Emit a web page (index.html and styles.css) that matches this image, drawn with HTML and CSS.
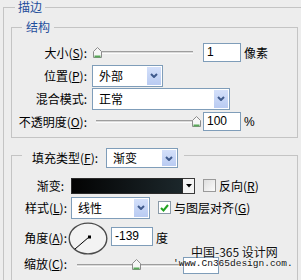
FILE: index.html
```html
<!DOCTYPE html>
<html lang="zh-CN">
<head>
  <meta charset="UTF-8" />
  <title>描边</title>
  <link rel="stylesheet" href="styles.css">
</head>
<body>
  <fieldset class="panel">
    <legend class="panel-title">描边</legend>

    <fieldset class="group group-struct">
      <legend class="group-title">结构</legend>
      <div class="form form-struct">
        <span class="lbl">大小(<u>S</u>):</span>
        <div class="ctl">
          <div class="slider">
            <span class="track"></span>
            <svg class="thumb" style="left:1px" width="9" height="11" viewBox="0 0 9 11"><path d="M4.5 .5 8.5 4.5V10.5H.5V4.5Z" fill="#f6f6f6" stroke="#8c8c8c"/><path d="M1.5 9.5H7.5" stroke="#58a858" stroke-width="2"/></svg>
          </div>
          <div class="num">1</div>
          <span class="unit">像素</span>
        </div>

        <span class="lbl">位置(<u>P</u>):</span>
        <div class="ctl">
          <div class="select w-pos"><span class="val">外部</span><span class="btn"><svg width="8" height="5" viewBox="0 0 8 5"><path d="M1 1 4 4 7 1" fill="none" stroke="#3f5a8c" stroke-width="2"/></svg></span></div>
        </div>

        <span class="lbl">混合模式:</span>
        <div class="ctl">
          <div class="select w-blend"><span class="val">正常</span><span class="btn"><svg width="8" height="5" viewBox="0 0 8 5"><path d="M1 1 4 4 7 1" fill="none" stroke="#3f5a8c" stroke-width="2"/></svg></span></div>
        </div>

        <span class="lbl">不透明度(<u>O</u>):</span>
        <div class="ctl">
          <div class="slider">
            <span class="track"></span>
            <svg class="thumb" style="left:100px" width="9" height="11" viewBox="0 0 9 11"><path d="M4.5 .5 8.5 4.5V10.5H.5V4.5Z" fill="#f6f6f6" stroke="#8c8c8c"/><path d="M1.5 9.5H7.5" stroke="#58a858" stroke-width="2"/></svg>
          </div>
          <div class="num">100</div>
          <span class="unit latin">%</span>
        </div>
      </div>
    </fieldset>

    <fieldset class="group group-fill">
      <legend class="fill-title">
        <span>填充类型(<u>F</u>):</span>
        <div class="select w-fill"><span class="val">渐变</span><span class="btn"><svg width="8" height="5" viewBox="0 0 8 5"><path d="M1 1 4 4 7 1" fill="none" stroke="#3f5a8c" stroke-width="2"/></svg></span></div>
      </legend>
      <div class="form form-fill">
        <span class="lbl lbl-grad">渐变:</span>
        <div class="ctl">
          <div class="grad"></div>
          <div class="grad-btn"><svg width="6" height="4" viewBox="0 0 6 4"><path d="M0 0H6L3 3.5Z" fill="#000"/></svg></div>
          <span class="check"></span>
          <span class="check-text">反向(<u>R</u>)</span>
        </div>

        <span class="lbl">样式(<u>L</u>):</span>
        <div class="ctl">
          <div class="select w-style"><span class="val">线性</span><span class="btn"><svg width="8" height="5" viewBox="0 0 8 5"><path d="M1 1 4 4 7 1" fill="none" stroke="#3f5a8c" stroke-width="2"/></svg></span></div>
          <span class="check checked"><svg width="9" height="8" viewBox="0 0 9 8"><path d="M1 4 3.5 6.5 8 1" fill="none" stroke="#22a322" stroke-width="2"/></svg></span>
          <span class="check-text">与图层对齐(<u>G</u>)</span>
        </div>

        <span class="lbl">角度(<u>A</u>):</span>
        <div class="ctl ctl-angle">
          <svg class="dial" width="40" height="33" viewBox="0 0 40 33">
            <ellipse cx="20" cy="16.5" rx="18.8" ry="15.4" fill="#f3f3f3" stroke="#4c4c4c" stroke-width="1.4"/>
            <path d="M21 15 7 27" stroke="#000" stroke-width="1"/>
            <rect x="20" y="13.5" width="3" height="3" fill="#000"/>
          </svg>
          <div class="num w-angle">-139</div>
          <span class="unit">度</span>
        </div>

        <span class="lbl">缩放(<u>C</u>):</span>
        <div class="ctl ctl-scale">
          <div class="slider w-scale">
            <span class="track"></span>
            <svg class="thumb" style="left:61px" width="9" height="11" viewBox="0 0 9 11"><path d="M4.5 .5 8.5 4.5V10.5H.5V4.5Z" fill="#f6f6f6" stroke="#8c8c8c"/><path d="M1.5 9.5H7.5" stroke="#58a858" stroke-width="2"/></svg>
          </div>
          <div class="num w-scale-num"></div>
        </div>
      </div>
    </fieldset>
  </fieldset>

  <div class="watermark">
    <div class="wm-cn">中国-365 设计网</div>
    <div class="wm-url">'www.Cn365design.com.</div>
  </div>
</body>
</html>
```

FILE: styles.css
```css
body {
  margin: 0;
  width: 301px;
  height: 280px;
  overflow: hidden;
  position: relative;
  background: #ededed;
  font-family: "Noto Sans CJK SC", sans-serif;
  font-size: 12px;
  line-height: 14px;
  color: #000;
}
u {
  text-decoration-thickness: 1px;
  text-underline-offset: 1px;
}
.panel {
  margin: 0 0 0 3px;
  padding: 0;
  width: 320px;
  height: 320px;
  box-sizing: border-box;
  border: 1px solid #c4c4c4;
  min-inline-size: 0;
}
.panel-title {
  margin-left: 11px;
  padding: 0 3px;
  line-height: 14px;
  color: #1f4e9c;
}
.group {
  margin: 7px 0 0 7px;
  padding: 8px 0 4px 0;
  width: 287px;
  box-sizing: border-box;
  border: 1px solid #c4c4c4;
  min-inline-size: 0;
}
.group-title {
  margin-left: 10px;
  padding: 0 4px;
  line-height: 12px;
  color: #1f4e9c;
}
.group-fill {
  margin-top: 4px;
  height: 200px;
}
.fill-title {
  margin-left: 10px;
  padding: 6px 6px 0 10px;
  display: flex;
  align-items: center;
  gap: 8px;
}
.form {
  display: grid;
  align-items: center;
}
.form-struct {
  grid-template-columns: 75px auto;
  column-gap: 5px;
  grid-auto-rows: 23px;
}
.form-fill {
  grid-template-columns: 55px auto;
  column-gap: 4px;
  grid-template-rows: 19px 25px 36px 16px;
}
.lbl {
  text-align: right;
  white-space: nowrap;
}
.lbl-grad {
  padding-right: 3px;
}
.ctl {
  display: flex;
  align-items: center;
  gap: 3px;
}
.unit {
  white-space: nowrap;
}
.latin {
  font-family: "Liberation Sans", sans-serif;
}

/* slider */
.slider {
  position: relative;
  width: 108px;
  height: 11px;
}
.track {
  display: block;
  margin: 4px 7px 0 4px;
  height: 1px;
  border-top: 1px solid #9e9e9e;
  border-bottom: 1px solid #fbfbfb;
  background: #dadada;
}
.thumb {
  position: absolute;
  top: 0;
}
.w-scale {
  width: 112px;
}
.w-scale .track {
  margin: 5px 0 0 6px;
}

/* text box */
.num {
  width: 38px;
  height: 19px;
  box-sizing: border-box;
  border: 1px solid #7f9db9;
  background: #fff;
  padding-left: 3px;
  font-family: "Liberation Sans", sans-serif;
  line-height: 17px;
}
.w-angle {
  width: 42px;
  align-self: flex-start;
  margin-top: 5px;
}
.w-scale-num {
  width: 36px;
  height: 17px;
  margin-left: -3px;
  margin-top: 3px;
}

/* dropdown */
.select {
  display: flex;
  height: 22px;
  box-sizing: border-box;
  border: 1px solid #7f9db9;
  background: #fff;
}
.select .val {
  flex: 1;
  padding-left: 6px;
  line-height: 20px;
}
.select .btn {
  width: 16px;
  display: flex;
  align-items: center;
  justify-content: center;
  background: linear-gradient(#d4e0fa, #b9cbf2);
  border: 1px solid #fff;
  box-sizing: border-box;
}
.w-pos { width: 71px; }
.w-blend { width: 138px; }
.w-fill { width: 72px; height: 20px; }
.w-fill .val { line-height: 18px; }
.w-style { width: 79px; }

/* gradient */
.grad {
  width: 112px;
  height: 16px;
  box-sizing: border-box;
  border: 1px solid #2a2a2a;
  background: linear-gradient(90deg, #030303, #1c272b);
}
.grad-btn {
  width: 12px;
  height: 16px;
  margin-left: -3px;
  box-sizing: border-box;
  border: 1px solid #3a3a3a;
  border-left: 0;
  background: #f4f4f4;
  display: flex;
  align-items: center;
  justify-content: center;
}

/* checkbox */
.check {
  width: 13px;
  height: 13px;
  margin-left: 5px;
  box-sizing: border-box;
  border: 1px solid #9a9a9a;
  background: linear-gradient(135deg, #dedede, #fbfbfb);
  display: flex;
  align-items: center;
  justify-content: center;
}
.checked {
  background: #fff;
  border-color: #8a9aa8;
}
.check-text {
  white-space: nowrap;
}

.ctl-angle .dial {
  margin-left: -3px;
}

/* overlay text */
.watermark {
  position: absolute;
  left: 173px;
  top: 245px;
  color: #111;
  text-shadow: 0 0 2px #fff;
}
.wm-cn {
  margin-left: 18px;
  line-height: 13px;
}
.wm-url {
  font-family: "Liberation Mono", monospace;
  font-size: 9.5px;
  line-height: 12px;
}
```
